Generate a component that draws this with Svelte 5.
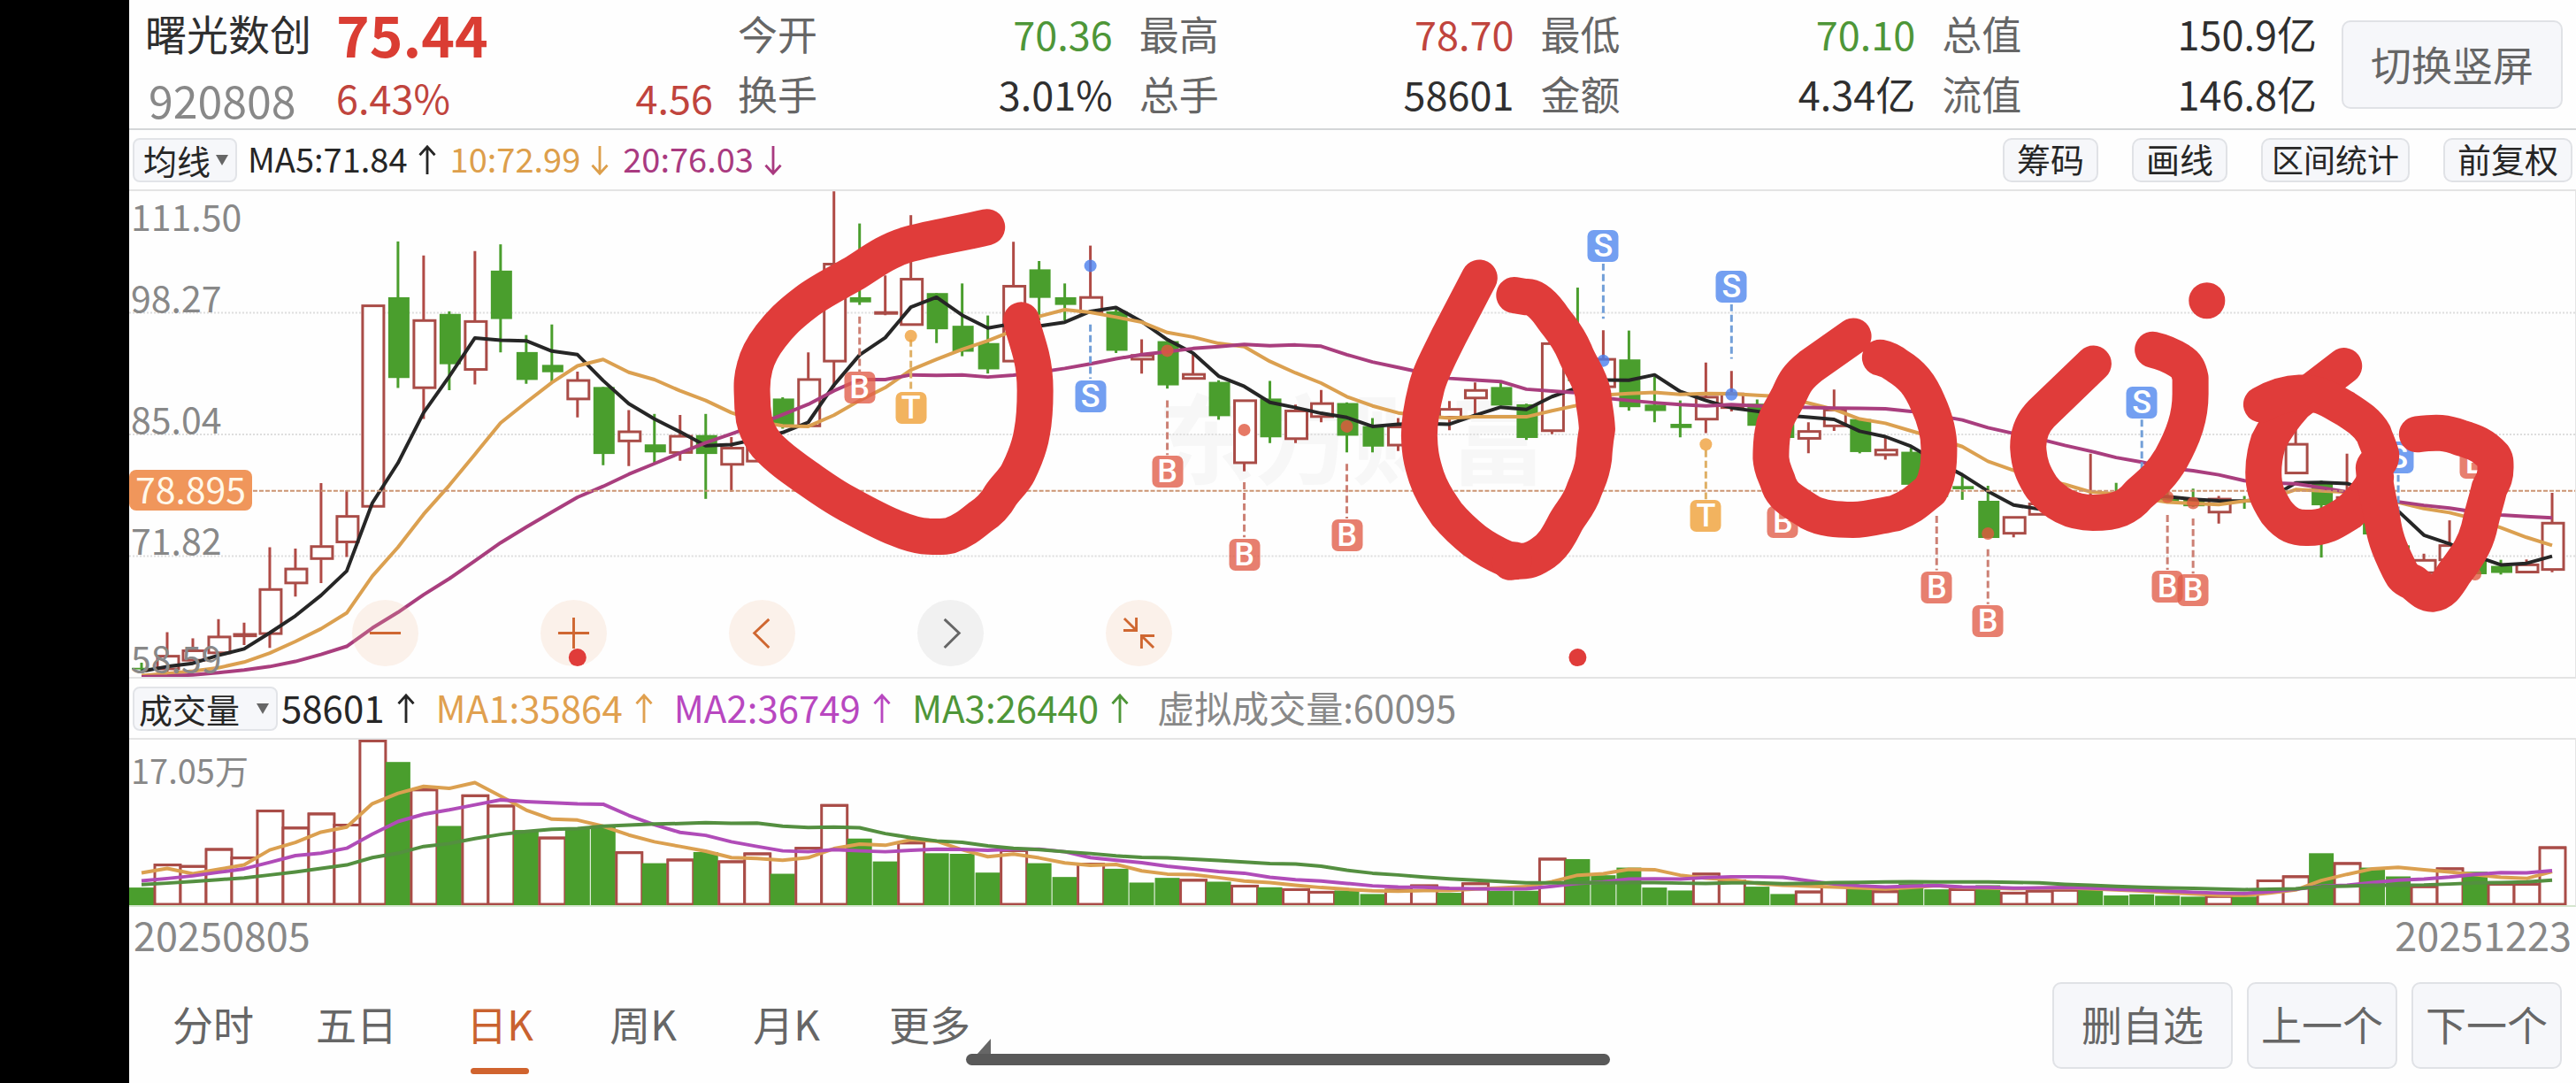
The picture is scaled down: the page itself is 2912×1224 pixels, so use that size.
<script>
  // Shared horizontal geometry of both charts, in viewBox units.
  const WIDTH = 2766;
  const PITCH = 29;
  const cx = (i) => 14 + PITCH * i;

  // Price chart: level 27 is the top edge, 11 levels are 4 units high.
  const py = (level) => ((level - 27) * 4) / 11;
  // Volume chart: level 210 is the top edge, 3 levels per unit.
  const vy = (level) => (level - 210) / 3;

  // kind high top bottom low
  const candles = `g 1498 1514 1519 1525,r 1403 1475 1520 1527,r 1422 1458 1493 1493,r 1362 1415 1470 1475,r 1373 1407 1417 1443,
r 1138 1267 1410 1452,r 1142 1203 1252 1292,r 938 1133 1176 1250,r 960 1039 1124 1168,r 382 382 1013 1013,
g 184 358 610 641,r 228 428 643 738,g 402 410 567 648,r 214 431 586 630,g 193 275 426 530,
g 476 529 616 628,g 443 569 592 625,r 590 615 678 733,g 638 638 847 882,r 710 775 809 885,
g 722 817 842 875,r 725 789 845 868,g 722 788 847 987,r 794 826 882 965,r 780 800 872 872,
g 670 674 757 768,r 530 612 762 762,r 28 252 560 640,g 128 358 374 382,r 290 403 407 414,
r 102 299 446 446,g 345 345 458 501,g 315 447 528 542,g 415 501 583 596,r 185 321 560 560,
g 245 271 360 430,g 315 358 382 430,r 197 356 408 408,g 395 402 525 532,r 489 537 554 596,
g 495 495 633 643,r 530 596 614 614,g 617 622 729 740,r 678 678 877 901,g 619 674 795 813,
r 693 710 802 813,r 647 687 733 748,g 686 688 790 842,g 735 760 824 842,r 735 760 822 838,
r 740 750 800 810,r 682 705 735 773,r 624 646 675 732,g 625 638 696 696,g 690 692 797 803,
r 500 500 777 785,g 328 500 620 620,r 461 549 640 640,g 462 552 701 712,g 606 693 713 748,
g 680 753 766 795,r 562 667 741 782,r 588 657 705 714,g 677 690 759 759,g 710 720 797 797,
r 748 774 801 845,r 646 707 762 775,g 738 738 841 845,r 793 832 852 865,g 828 840 943 943,
g 890 900 981 981,g 916 947 957 990,g 946 993 1109 1109,r 1042 1042 1097 1107,r 1000 1000 1038 1038,
r 985 990 1020 1020,r 846 975 1000 1000,g 937 975 1000 1000,g 960 980 995 995,g 960 985 996 996,
g 955 985 1010 1012,r 978 985 1031 1064,g 978 992 996 1018,r 940 950 990 990,r 740 814 909 909,
g 930 934 1007 1170,r 846 980 1020 1020,g 960 975 1098 1098,g 1100 1132 1170 1170,r 1158 1176 1220 1220,
r 1054 1130 1180 1180,g 1170 1180 1222 1222,g 1177 1196 1218 1223,r 1176 1190 1218 1218,r 968 1060 1210 1216`
    .split(',')
    .map((row, i) => {
      const [kind, ...levels] = row.trim().split(' ');
      const [high, top, bottom, low] = levels.map((l) => py(Number(l)));
      return { kind, x: cx(i), high, top, bottom, low };
    });

  const volumes = `g714 r634 r639 r581 r610 r450 r508 r460 r498 r211 g286 r378 g504 r398 r433 g518 r542 g513 g507 r592 g631 r617 g593 r623 r596 g667 r577 r431 g547 g625 r559 g597 g599 g663 r585 g631 g678 r631 g650 g697 g681 r686 g694 r706 g713 r718 r727 g724 g736 r720 r705 g732 r698 g725 g725 r614 g617 g672 g646 g714 g724 r665 r688 g711 g736 r726 r695 g708 r725 g700 g720 r718 g706 r730 r723 r720 g722 g741 g737 g742 g745 r741 g745 r688 r674 g597 r629 g646 g676 r708 r647 g660 r700 r700 r575`
    .split(' ')
    .map((v, i) => ({ kind: v[0], x: cx(i), top: vy(Number(v.slice(1))) }));

  const points = (levels, y) =>
    levels.split(' ').map((l, i) => `${cx(i)},${y(Number(l)).toFixed(1)}`).join(' ');

  const averages = [
    { cls: 'black', pts: points('1525 1510 1500 1475 1455 1405 1352 1288 1212 1000 875 718 605 485 492 494 526 537 618 690 738 778 821 818 800 780 748 632 538 484 389 358 414 454 440 448 436 402 390 434 490 532 604 636 686 702 720 733 761 754 752 754 726 701 708 668 640 616 617 600 652 680 703 714 726 732 739 776 793 823 870 912 963 1006 1019 1010 990 985 978 980 988 993 994 985 937 936 939 965 1025 1100 1127 1165 1193 1188 1166', py) },
    { cls: 'orange', pts: points('1538 1532 1524 1514 1496 1468 1432 1392 1343 1228 1138 1035 945 848 750 686 624 572 552 592 615 650 680 718 745 759 761 726 680 640 585 552 521 494 462 418 397 405 420 436 468 482 502 512 558 594 626 668 697 719 728 735 731 731 731 712 695 663 658 655 661 658 659 664 668 688 708 738 751 775 798 824 870 898 925 942 965 972 985 997 1001 1005 994 985 958 962 966 985 998 1017 1030 1050 1077 1107 1132', py) },
    { cls: 'plum', pts: points('1542 1540 1536 1529 1521 1510 1494 1472 1447 1390 1341 1286 1236 1180 1124 1075 1028 982 948 910 877 844 812 784 756 724 692 650 615 615 600 602 600 607 601 592 580 566 550 537 528 518 512 505 509 507 511 537 560 577 594 611 616 621 645 651 656 672 680 687 693 697 693 697 699 702 704 705 706 714 727 741 765 783 800 820 838 858 872 890 899 912 930 937 940 952 965 980 996 1007 1016 1028 1037 1042 1046', py) }
  ];

  const volumeAverages = [
    { cls: 'orange', pts: points('664 649 667 652 637 586 560 525 508 428 393 369 376 356 402 450 481 484 505 535 558 574 590 612 615 621 612 581 566 570 551 556 585 609 600 613 630 638 635 657 668 670 680 692 697 706 714 720 725 727 724 724 719 715 711 694 672 667 652 653 672 682 687 700 706 709 712 715 719 714 708 714 715 718 716 715 718 722 726 731 736 740 741 733 722 690 669 650 645 653 661 670 679 683 660', vy) },
    { cls: 'violet', pts: points('691 683 674 662 650 628 605 597 580 532 489 464 449 432 415 421 425 429 430 468 500 526 536 558 574 589 592 585 589 592 587 583 584 587 583 583 592 612 621 629 641 650 659 665 679 687 692 700 708 712 713 717 718 719 718 710 700 695 685 684 685 680 677 677 679 691 702 708 712 709 707 712 713 716 715 714 716 720 723 726 730 733 734 728 720 709 706 697 689 685 678 669 663 664 656', vy) },
    { cls: 'leaf', pts: points('704 699 693 687 681 671 661 649 637 612 597 574 564 547 533 523 515 513 505 501 497 496 493 495 494 505 509 508 510 530 544 555 560 572 580 585 592 598 606 611 613 617 622 627 632 634 641 655 665 671 678 684 689 693 698 698 697 698 697 697 699 700 698 698 701 700 697 696 695 694 695 695 695 696 698 703 706 710 713 715 717 719 721 720 718 711 709 706 706 705 702 698 697 695 689', vy) }
  ];

  // Trade markers: candle index, badge level, leader line from/to, dot level.
  const markers = [
    { i: 28, t: 'B', at: 641, from: 418, to: 590 },
    { i: 30, t: 'T', at: 703, from: 490, to: 650, dot: 479 },
    { i: 37, t: 'S', at: 667, from: 443, to: 612, dot: 260 },
    { i: 40, t: 'B', at: 903, from: 680, to: 850, dot: 525 },
    { i: 43, t: 'B', at: 1160, from: 935, to: 1107, dot: 772 },
    { i: 47, t: 'B', at: 1102, from: 878, to: 1048, dot: 761 },
    { i: 57, t: 'S', at: 199, from: 253, to: 425, dot: 556 },
    { i: 61, t: 'T', at: 1040, from: 835, to: 988, dot: 817 },
    { i: 62, t: 'S', at: 326, from: 380, to: 550, dot: 661 },
    { i: 64, t: 'B', at: 1060, from: 836, to: 1006 },
    { i: 70, t: 'B', at: 1264, from: 1040, to: 1210 },
    { i: 72, t: 'B', at: 1368, from: 1144, to: 1315, dot: 1095 },
    { i: 78, t: 'S', at: 686, from: 740, to: 912 },
    { i: 79, t: 'B', at: 1260, from: 1037, to: 1208, dot: 981 },
    { i: 80, t: 'B', at: 1272, from: 1048, to: 1220, dot: 1000 },
    { i: 88, t: 'S', at: 858, from: 912, to: 1080 },
    { i: 91, t: 'B', at: 873, from: 920, to: 1090, dot: 1222 }
  ];

  const axis = [
    { text: '111.50', y: 27 },
    { text: '98.27', y: 119 },
    { text: '85.04', y: 257 },
    { text: '71.82', y: 394 },
    { text: '58.59', y: 528 }
  ];

  const quotes = [
    { label: '今开', value: '70.36', tone: 'down' },
    { label: '最高', value: '78.70', tone: 'up' },
    { label: '最低', value: '70.10', tone: 'down' },
    { label: '总值', value: '150.9亿', tone: '' },
    { label: '换手', value: '3.01%', tone: '' },
    { label: '总手', value: '58601', tone: '' },
    { label: '金额', value: '4.34亿', tone: '' },
    { label: '流值', value: '146.8亿', tone: '' }
  ];

  const tabs = ['分时', '五日', '日K', '周K', '月K', '更多'];
  let active = $state('日K');
</script>

{#snippet arrow(down)}
  <svg class="arrow" viewBox="0 0 20 38" aria-hidden="true">
    {#if down}
      <path d="M10 2V35M1 25L10 35L19 25" />
    {:else}
      <path d="M10 36V3M1 13L10 3L19 13" />
    {/if}
  </svg>
{/snippet}

<main class="screen">
  <header class="quote">
    <div class="ident">
      <h1>曙光数创</h1>
      <span class="code">920808</span>
    </div>
    <div class="price">
      <strong>75.44</strong>
      <div class="change"><span>6.43%</span><span>4.56</span></div>
    </div>
    <dl class="quotes">
      {#each quotes as q}
        <div class="cell"><dt>{q.label}</dt><dd class={q.tone}>{q.value}</dd></div>
      {/each}
    </dl>
    <button class="soft rotate">切换竖屏</button>
  </header>

  <section class="bar indicators">
    <div class="pick main-pick">
      <select aria-label="主图指标"><option>均线</option></select>
      <svg viewBox="0 0 16 14" aria-hidden="true"><path d="M1 1H15L8 13Z" /></svg>
    </div>
    <p class="legend">
      <span class="t-black">MA5:71.84{@render arrow(false)}</span>
      <span class="t-orange">10:72.99{@render arrow(true)}</span>
      <span class="t-plum">20:76.03{@render arrow(true)}</span>
    </p>
    <nav class="tools">
      <button class="soft">筹码</button>
      <button class="soft">画线</button>
      <button class="soft tight">区间统计</button>
      <button class="soft">前复权</button>
    </nav>
  </section>

  <section class="chart" aria-label="K线图">
    <div class="watermark" aria-hidden="true">东方财富</div>
    <svg class="plot" viewBox="0 0 2766 551" preserveAspectRatio="none">
      {#each [138, 276, 414] as g}
        <line class="grid" x1="0" x2={WIDTH} y1={g} y2={g} />
      {/each}
      {#each candles as c}
        {#if c.kind === 'g'}
          <line class="wick-g" x1={c.x} x2={c.x} y1={c.high} y2={c.low} />
          <rect class="body-g" x={c.x - 11} y={c.top} width="24" height={c.bottom - c.top} />
        {:else}
          <path class="wick-r" d="M{c.x} {c.high}V{c.top}M{c.x} {c.bottom}V{c.low}" />
          <rect class="body-r" x={c.x - 11} y={c.top + 1} width="24" height={Math.max(c.bottom - c.top - 2, 1)} />
        {/if}
      {/each}
      {#each averages as a}
        <polyline class="line {a.cls}" points={a.pts} />
      {/each}
      <line class="last" x1="0" x2={WIDTH} y1="340" y2="340" />
      {#each markers as m}
        <line class="lead lead-{m.t}" x1={cx(m.i)} x2={cx(m.i)} y1={py(m.from)} y2={py(m.to)} />
        {#if m.dot}
          <circle class="dot dot-{m.t}" cx={cx(m.i)} cy={py(m.dot)} r="7" />
        {/if}
      {/each}
    </svg>

    {#each axis as a}
      <span class="axis" style="top: {(a.y / 551) * 100}%">{a.text}</span>
    {/each}
    <span class="last-tag">78.895</span>

    {#each markers as m}
      <span
        class="marker mark-{m.t}"
        style="left: {(cx(m.i) / WIDTH) * 100}%; top: {(py(m.at) / 551) * 100}%">{m.t}</span>
    {/each}

    <div class="controls">
      <button aria-label="缩小"><svg viewBox="0 0 40 40"><path d="M2 20H38" /></svg></button>
      <button aria-label="放大"><svg viewBox="0 0 40 40"><path d="M2 20H38M20 2V38" /></svg></button>
      <button aria-label="向左"><svg viewBox="0 0 40 40"><path d="M28 4L11 20L28 37" /></svg></button>
      <button aria-label="向右" class="muted"><svg viewBox="0 0 40 40"><path d="M13 4L30 20L13 37" /></svg></button>
      <button aria-label="收起"><svg viewBox="0 0 40 40"><path d="M3 3L17 17M17 2V17H2M37 37L23 23M23 38V23H38" /></svg></button>
    </div>

    <svg class="plot ink" viewBox="0 0 2766 551" preserveAspectRatio="none" aria-hidden="true">
      <g transform="translate(654 -10) scale(.4464 .3636)">
        <path d="M708 140C640 160 560 175 505 195C450 215 410 255 370 285C320 320 285 340 250 373C205 415 185 440 160 480C135 520 125 550 120 575C112 610 112 630 113 660C113 690 114 710 118 740C124 775 135 797 150 820C180 860 215 890 250 920C285 950 315 977 350 1000C395 1030 435 1058 480 1080C520 1100 540 1104 560 1105C580 1106 598 1107 615 1102C645 1090 665 1070 690 1045C715 1025 730 1005 742 978C756 950 775 935 787 905C805 860 817 820 822 780C829 735 830 700 830 650C830 600 826 570 820 540C812 500 800 460 795 430" />
      </g>
      <g transform="translate(1334 -10) scale(.4592 .3636)">
        <path d="M420 298L345 480C320 545 300 590 290 640C278 700 272 740 272 790C273 840 277 870 290 920C305 975 322 1000 340 1035C360 1065 380 1090 410 1120C440 1148 460 1160 485 1174Q500 1187 515 1182C530 1182 545 1183 570 1162C600 1140 615 1105 632 1062C645 1030 665 1010 678 960C690 920 697 910 702 860C704 820 704 815 710 770C708 720 702 700 700 660C690 600 670 580 655 530C635 470 615 450 595 412C570 370 550 355 535 358L506 352" />
        <path d="M496 1185L505 1178" />
        <path d="M1341 480L1235 575C1200 610 1195 630 1182 665C1160 720 1147 740 1145 765C1138 800 1138 830 1138 860C1140 900 1150 910 1158 945C1170 985 1200 1000 1235 1030C1265 1050 1300 1053 1340 1053C1380 1053 1405 1040 1445 1032C1490 1010 1500 990 1530 962C1550 920 1552 880 1552 830C1552 780 1543 740 1525 690C1505 630 1485 600 1450 573Q1430 553 1407 547" />
      </g>
      <g transform="translate(2034 -10) scale(.4669 .3636)">
        <path d="M401 566L275 722C250 755 243 790 243 825C245 880 255 910 275 950C305 1000 345 1030 400 1031C455 1031 485 1015 510 975C545 935 565 915 590 860C620 790 636 730 636 660L636 610C632 585 627 570 610 557Q580 532 545 522" />
        <path d="M676 369h.1" />
        <path d="M1008 573L890 690C855 740 840 770 825 810C815 850 813 880 813 905C813 955 822 985 845 1030C870 1070 890 1079 920 1078C965 1078 985 1058 1020 1030C1050 995 1075 960 1085 920" />
        <path d="M808 693C840 670 870 658 900 657C950 655 975 680 1010 705C1040 730 1065 750 1080 785C1085 805 1095 830 1098 850C1098 880 1085 870 1080 890C1082 940 1090 980 1098 1030C1105 1090 1110 1120 1130 1175C1150 1230 1150 1235 1175 1248C1195 1270 1205 1284 1222 1284C1245 1280 1255 1262 1275 1220C1310 1160 1325 1130 1335 1080C1345 1020 1352 1000 1360 955C1370 930 1375 920 1375 890C1375 870 1375 865 1370 855C1345 820 1325 810 1290 797C1255 780 1235 778 1185 786" />
      </g>
      <circle cx="507" cy="529" r="10" />
      <circle cx="1638" cy="529" r="10" />
    </svg>
  </section>

  <section class="bar volume-bar">
    <div class="pick vol-pick">
      <select aria-label="副图指标"><option>成交量</option></select>
      <svg viewBox="0 0 16 14" aria-hidden="true"><path d="M1 1H15L8 13Z" /></svg>
    </div>
    <p class="legend big">
      <span class="t-black">58601{@render arrow(false)}</span>
      <span class="t-amber">MA1:35864{@render arrow(false)}</span>
      <span class="t-violet">MA2:36749{@render arrow(false)}</span>
      <span class="t-leaf">MA3:26440{@render arrow(false)}</span>
      <span class="t-gray">虚拟成交量:60095</span>
    </p>
  </section>

  <section class="volume" aria-label="成交量图">
    <svg class="plot" viewBox="0 0 2766 188" preserveAspectRatio="none">
      {#each volumes as v}
        {#if v.kind === 'g'}
          <rect class="body-g" x={v.x - 14} y={v.top} width="28" height={188 - v.top} />
        {:else}
          <rect class="body-r" x={v.x - 14} y={v.top + 1} width="29" height={186 - v.top} />
          <line class="cap" x1={v.x - 15} x2={v.x + 16} y1={v.top + 1} y2={v.top + 1} />
        {/if}
      {/each}
      {#each volumeAverages as a}
        <polyline class="line {a.cls}" points={a.pts} />
      {/each}
    </svg>
    <span class="peak">17.05万</span>
  </section>

  <div class="dates"><time datetime="2025-08-05">20250805</time><time datetime="2025-12-23">20251223</time></div>

  <footer class="foot">
    <nav class="tabs">
      {#each tabs as t}
        <button class:active={active === t} class:more={t === '更多'} onclick={() => (active = t)}>{t}</button>
      {/each}
    </nav>
    <div class="actions">
      <button class="soft wide">删自选</button>
      <button class="soft">上一个</button>
      <button class="soft">下一个</button>
    </div>
  </footer>
  <div class="home"></div>
</main>

<style>
  :global(body) {
    margin: 0;
    background: #000;
  }
  .screen {
    position: relative;
    box-sizing: border-box;
    min-height: 100vh;
    margin-left: 146px;
    background: #fefefe;
    color: #2f2f2f;
    font-family: 'Noto Sans CJK SC', sans-serif;
    display: flex;
    flex-direction: column;
  }
  button,
  select {
    font: inherit;
    color: inherit;
    margin: 0;
    padding: 0;
    border: 0;
    background: none;
    appearance: none;
    white-space: nowrap;
  }
  .soft {
    background: #f6f7fa;
    border: 2px solid #e0e2e6;
    border-radius: 10px;
    box-sizing: border-box;
  }

  .quote {
    display: grid;
    grid-template-columns: 216px 426fr 1813fr 278px;
    height: 145px;
    padding: 0 15px 0 18px;
    border-bottom: 2px solid #d4d6d8;
  }
  .ident,
  .price {
    display: flex;
    flex-direction: column;
  }
  h1 {
    margin: 0;
    font-size: 47px;
    line-height: 74px;
    font-weight: 400;
  }
  .code {
    padding-left: 4px;
    font-size: 50px;
    line-height: 76px;
    color: #888;
  }
  .price {
    color: #c0443d;
  }
  .price strong {
    font-size: 64px;
    line-height: 74px;
    font-weight: 700;
    color: #da3d33;
  }
  .change {
    display: flex;
    justify-content: space-between;
    font-size: 45px;
    line-height: 72px;
  }
  .quotes {
    display: grid;
    grid-template-columns: repeat(4, 1fr);
    column-gap: 30px;
    margin: 0 0 0 28px;
    padding-top: 4px;
    font-size: 45px;
    line-height: 68px;
    align-content: start;
  }
  .cell {
    display: flex;
    justify-content: space-between;
  }
  dt {
    color: #666;
  }
  dd {
    margin: 0;
  }
  .up {
    color: #c0443d;
  }
  .down {
    color: #4e9638;
  }
  .rotate {
    margin: 23px 0 0 28px;
    height: 100px;
    padding-bottom: 4px;
    font-size: 46px;
    color: #666;
  }

  .bar {
    display: flex;
    align-items: center;
    box-sizing: border-box;
    height: 67px;
    padding: 0 4px;
    color: #262626;
  }
  .pick {
    position: relative;
    flex: none;
  }
  .pick select {
    display: block;
    box-sizing: border-box;
    width: 100%;
    height: 50px;
    padding: 0 0 0 10px;
    font-size: 38px;
    line-height: 46px;
    background: #f6f7fa;
    border: 2px solid #e2e4e8;
    border-radius: 8px;
  }
  .pick svg {
    position: absolute;
    right: 9px;
    top: 18px;
    width: 16px;
    height: 14px;
    fill: #666;
    pointer-events: none;
  }
  .main-pick {
    width: 118px;
  }
  .vol-pick {
    width: 164px;
  }
  .vol-pick select {
    padding-left: 5px;
  }
  .legend {
    display: flex;
    gap: 16px;
    margin: 0 0 0 12px;
    padding-bottom: 4px;
    font-size: 38px;
    line-height: 56px;
    white-space: nowrap;
  }
  .legend span {
    display: flex;
    align-items: center;
    gap: 12px;
  }
  .legend.big {
    gap: 24px;
    margin-left: 4px;
    font-size: 42px;
  }
  .legend.big span {
    gap: 14px;
  }
  .arrow {
    width: 20px;
    height: 36px;
    margin-top: 4px;
    fill: none;
    stroke: currentColor;
    stroke-width: 3;
  }
  .t-black { color: #262626; }
  .t-orange { color: #dd9f4b; }
  .t-amber { color: #e0a04f; }
  .t-plum { color: #a93a80; }
  .t-violet { color: #b847c0; }
  .t-leaf { color: #4e9638; }
  .legend .t-gray {
    color: #888;
    padding-left: 8px;
  }
  .tools {
    display: flex;
    gap: 38px;
    margin-left: auto;
    font-size: 38px;
    line-height: 42px;
  }
  .tools button {
    height: 50px;
    padding: 0 14px 4px;
  }
  .tools .tight {
    padding: 0 10px 4px;
    font-size: 36px;
  }

  .chart,
  .volume {
    position: relative;
    border: 2px solid #e4e4e4;
    border-left: 0;
    border-right-width: 1px;
  }
  .chart {
    height: 549px;
  }
  .volume {
    height: 187px;
    border-bottom-color: #d5e6cf;
  }
  .plot {
    display: block;
    position: absolute;
    inset: 0;
    width: 100%;
    height: 100%;
    overflow: hidden;
  }
  .grid {
    stroke: #ddd;
    stroke-width: 2;
    stroke-dasharray: 2 2;
  }
  .last {
    stroke: #cc9472;
    stroke-width: 2;
    stroke-dasharray: 5 2;
  }
  .wick-g,
  .wick-r {
    stroke-width: 3;
    stroke: #4a9e2d;
    fill: none;
  }
  .wick-r {
    stroke: #b04a45;
  }
  .body-g {
    fill: #4a9e2d;
  }
  .body-r {
    fill: #fff;
    stroke: #a94c47;
    stroke-width: 3;
  }
  .cap {
    stroke: #a94c47;
    stroke-width: 3;
  }
  .line {
    fill: none;
    stroke-width: 4;
    stroke-linejoin: round;
  }
  .black { stroke: #262626; }
  .orange { stroke: #dba050; }
  .plum { stroke: #a93e7e; }
  .violet { stroke: #b04cb8; }
  .leaf { stroke: #548f40; }
  .lead {
    stroke-width: 3;
    stroke-dasharray: 8 4;
  }
  .lead-B { stroke: #cc8074; }
  .lead-S { stroke: #729fd8; }
  .lead-T { stroke: #dfb066; }
  .dot { opacity: 0.8; }
  .dot-B { fill: #e0583f; }
  .dot-S { fill: #4a80ee; }
  .dot-T { fill: #efa03c; }

  .watermark {
    position: absolute;
    inset: 0;
    display: grid;
    place-items: center;
    font-size: 110px;
    line-height: 120px;
    font-weight: 700;
    color: #f7f7f7;
  }
  .axis {
    position: absolute;
    left: 2px;
    transform: translateY(-50%);
    font-size: 41px;
    line-height: 36px;
    color: #888;
  }
  .last-tag {
    position: absolute;
    left: 0;
    top: 315px;
    width: 139px;
    height: 46px;
    border-radius: 8px;
    background: #f0965b;
    color: #fff8ea;
    font-size: 41px;
    line-height: 40px;
    text-align: center;
  }
  .marker {
    position: absolute;
    transform: translate(-50%, -50%);
    width: 35px;
    height: 36px;
    border-radius: 7px;
    color: #fff;
    font-family: Roboto, sans-serif;
    font-weight: 500;
    font-size: 36px;
    line-height: 37px;
    text-align: center;
  }
  .mark-B { background: rgba(225, 95, 75, 0.8); }
  .mark-S { background: #739ff1; }
  .mark-T { background: #f2b35f; }

  .controls {
    position: absolute;
    left: 252px;
    bottom: 12px;
    display: flex;
    gap: 138px;
  }
  .controls button {
    display: grid;
    place-items: center;
    width: 75px;
    height: 75px;
    border-radius: 50%;
    background: rgba(240, 190, 155, 0.2);
  }
  .controls .muted {
    background: rgba(190, 190, 190, 0.2);
  }
  .controls svg {
    width: 39px;
    height: 39px;
    fill: none;
    stroke: #cf6731;
    stroke-width: 3;
  }
  .controls .muted svg {
    stroke: #666;
  }
  .ink {
    pointer-events: none;
    fill: #e03c3a;
  }
  .ink path {
    fill: none;
    stroke: #e03c3a;
    stroke-width: 41px;
    stroke-linecap: round;
    stroke-linejoin: round;
    vector-effect: non-scaling-stroke;
  }

  .peak {
    position: absolute;
    left: 2px;
    top: 14px;
    font-size: 38px;
    line-height: 40px;
    color: #888;
  }
  .dates {
    display: flex;
    justify-content: space-between;
    height: 68px;
    padding: 0 5px;
    font-size: 45px;
    line-height: 62px;
    color: #888;
  }
  .foot {
    display: flex;
    justify-content: space-between;
    align-items: center;
    flex: 1;
    padding: 0 16px 0 14px;
    font-size: 46px;
    color: #666;
  }
  .tabs {
    display: flex;
  }
  .tabs button {
    position: relative;
    width: 162px;
    height: 98px;
    padding-bottom: 6px;
    line-height: 90px;
  }
  .tabs .active {
    color: #c9622f;
  }
  .tabs .active::after {
    content: '';
    position: absolute;
    left: 50%;
    bottom: -6px;
    width: 66px;
    height: 7px;
    margin-left: -33px;
    border-radius: 4px;
    background: #d0632e;
  }
  .tabs .more::after {
    content: '';
    position: absolute;
    right: 12px;
    bottom: 16px;
    border-left: 16px solid transparent;
    border-bottom: 18px solid #666;
  }
  .actions {
    display: flex;
    gap: 16px;
  }
  .actions button {
    width: 170px;
    height: 98px;
    padding-bottom: 6px;
    line-height: 86px;
  }
  .actions .wide {
    width: 204px;
  }
  .home {
    position: absolute;
    left: 50%;
    bottom: 20px;
    width: 728px;
    height: 13px;
    margin-left: -437px;
    border-radius: 7px;
    background: #595959;
  }
</style>
